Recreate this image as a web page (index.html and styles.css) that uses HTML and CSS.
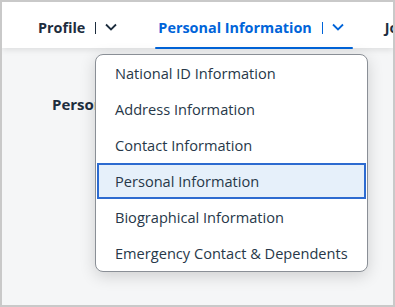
FILE: index.html
```html
<!DOCTYPE html>
<html>
<head>
<meta charset="utf-8">
<link rel="stylesheet" href="styles.css">
</head>
<body>
<div class="frame">
  <header class="tabbar">
    <div class="tab">
      <span class="tab-label">Profile</span>
      <span class="sep"></span>
      <svg class="chev" width="12" height="8" viewBox="0 0 12 8"><path d="M1 1.5 L6 6.5 L11 1.5" fill="none" stroke="currentColor" stroke-width="1.8"/></svg>
    </div>
    <div class="tab active">
      <span class="tab-label">Personal Information</span>
      <span class="sep"></span>
      <svg class="chev" width="12" height="8" viewBox="0 0 12 8"><path d="M1 1.5 L6 6.5 L11 1.5" fill="none" stroke="currentColor" stroke-width="1.8"/></svg>
    </div>
    <div class="tab">
      <span class="tab-label">Job Information</span>
    </div>
  </header>
  <main class="content">
    <h2 class="section-title">Personal Information</h2>
  </main>
  <ul class="menu">
    <li class="menu-item">National ID Information</li>
    <li class="menu-item">Address Information</li>
    <li class="menu-item">Contact Information</li>
    <li class="menu-item selected">Personal Information</li>
    <li class="menu-item">Biographical Information</li>
    <li class="menu-item">Emergency Contact &amp; Dependents</li>
  </ul>
</div>
</body>
</html>
```
FILE: styles.css
```css
html, body {
  margin: 0;
  padding: 0;
  overflow: hidden;
}
body {
  font-family: "Open Sans", "Noto Sans", sans-serif;
  color: #1d2d3e;
}
.frame {
  position: relative;
  width: 395px;
  height: 307px;
  box-sizing: border-box;
  border: 2px solid #c9c9c9;
  background: #f5f6f7;
  overflow: hidden;
}
.tabbar {
  position: relative;
  z-index: 1;
  height: 46px;
  background: #fff;
  display: flex;
  align-items: stretch;
  padding-left: 33px;
  gap: 29px;
  white-space: nowrap;
  box-shadow: 0 2px 6px rgba(0, 0, 0, 0.10);
}
.tab {
  display: flex;
  align-items: center;
  padding: 0 9px 0 3px;
  font-size: 14.4px;
  font-weight: 700;
  color: #1d2d3e;
  position: relative;
}
.tab.active {
  color: #0064d9;
}
.tab.active::after {
  content: "";
  position: absolute;
  left: 0;
  right: 0;
  bottom: -1px;
  height: 2px;
  background: #0064d9;
  border-radius: 1px;
}
.tab-label {
  padding-top: 4px;
}
.sep {
  display: inline-block;
  width: 1px;
  height: 12px;
  background: currentColor;
  margin-left: 10px;
  margin-top: 5px;
}
.chev {
  margin-left: 9px;
  margin-top: 4px;
  display: block;
}
.content {
  padding: 46px 0 0 50px;
}
.section-title {
  margin: 0;
  font-size: 15px;
  font-weight: 700;
  line-height: 20px;
  color: #1d2d3e;
}
.menu {
  position: absolute;
  z-index: 2;
  left: 93px;
  top: 52px;
  width: 271px;
  margin: 0;
  padding: 0;
  list-style: none;
  background: #fff;
  border: 1px solid #8a8f96;
  border-radius: 8px;
  box-shadow: 0 4px 16px rgba(0, 0, 0, 0.16);
  overflow: hidden;
}
.menu-item {
  height: 36px;
  line-height: 36px;
  padding-left: 19px;
  font-size: 14.6px;
  color: #273849;
  white-space: nowrap;
  box-sizing: border-box;
}
.menu-item.selected {
  background: #e6f0fa;
  margin: 0 1px;
  padding-left: 18px;
  outline: 2px solid #2d6bd0;
  outline-offset: -2px;
}
```
